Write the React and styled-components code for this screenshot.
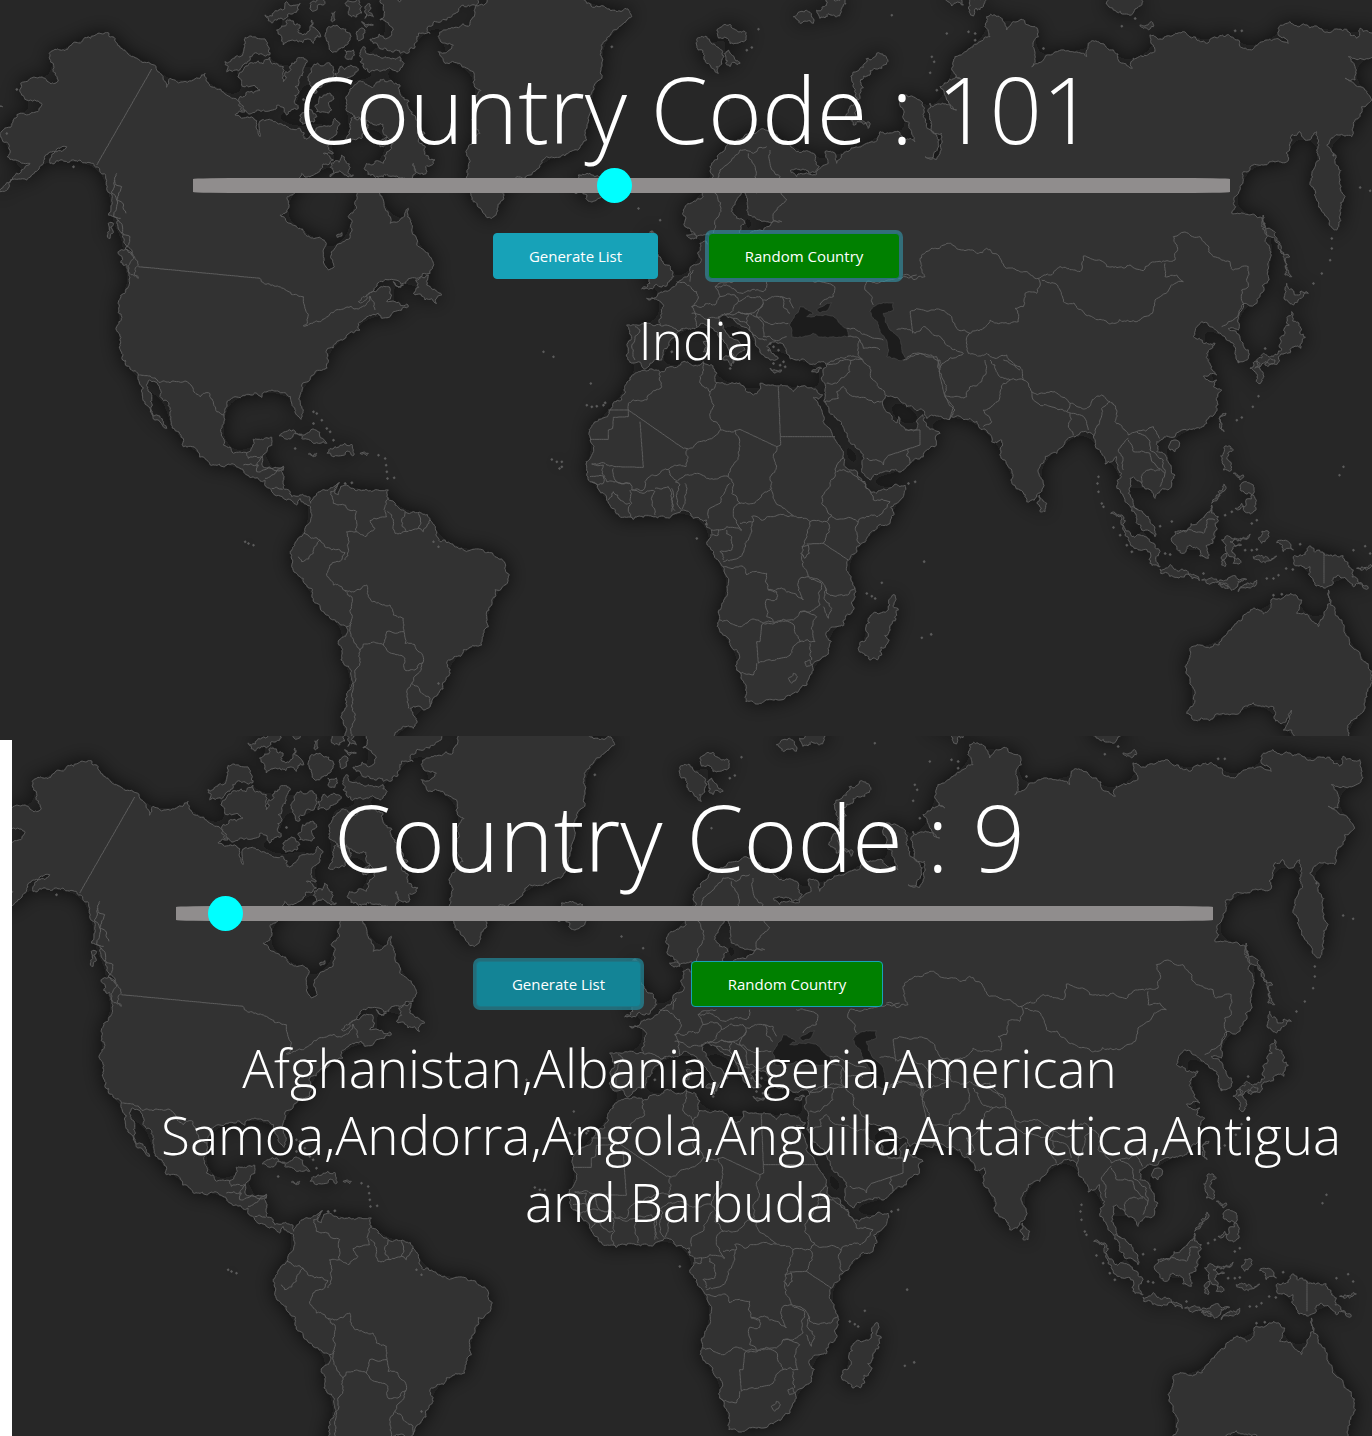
import React, { useId, useState } from "react";
import styled, { createGlobalStyle, css } from "styled-components";

/* ---------- Map data: points are thirds of a map unit, given per tile ---------- */

const TILES = {
  A: [0, 0],
  B: [1260, 0],
  C: [2640, 0],
  D: [300, 1080],
  E: [1680, 1020],
  F: [2760, 1080],
  G: [1800, 570],
  K: [750, 0],
};

const CONTINENTS = [
  [
    "A -20 585 0 570 30 545 60 520 90 490 40 480 22 470 30 450 28 436 8 424 10 390 40 360 70 340 110 335 125 310 80 300 65 285 62 250 100 232 135 235 150 250 175 240 160 215 160 190 148 160 165 148 195 152 250 118 290 103 325 98 345 115 370 150 400 170 440 188 470 210 485 225 500 262 510 235 530 245 580 240 600 235 615 220 625 250 650 268 690 290 730 318 735 335 705 345 725 355 770 362 780 410 785 360 820 365 860 380 900 385 912 415 940 400 960 380 985 378 1005 355 1020 370 1010 400 985 430 1000 460 970 460 1000 480 950 520 930 530 905 520 900 550 862 590 855 640 840 645 870 670 900 685 945 715 975 725 970 770 985 810 1003 800 1008 740 1050 715 1055 670 1045 650 1070 625 1072 580 1080 570 1100 575 1140 570 1150 600 1165 640 1170 670 1195 665 1225 625 1235 690 1250 735 1285 760 1300 790 1290 820 1250 835 1155 838 1110 880 1075 905 1100 885 1140 862 1170 865 1175 885 1160 905 1185 905 1220 912 1225 920 1180 935 1145 955 1135 940 1100 950 1075 970 1080 990 1040 1005 1010 1025 980 1050 985 1080 980 1105",
    "D 680 22 640 45 605 75 600 105 610 150 603 178 590 165 580 140 572 110 555 98 520 92 490 98 485 112 440 103 400 112 380 130 372 165 362 215 370 255 400 280 440 278 460 238 515 232 500 275 485 312 550 318 552 350 550 385 575 410 600 405 630 412 632 430 660 395 690 385 718 368 704 385 704 400 715 404 722 380 745 378 780 390 815 395 865 390 860 410 915 455 965 460 990 480 1010 515 1020 545 1050 550 1085 565 1100 575 1160 578 1215 610 1228 645 1215 675 1175 720 1165 800 1145 855 1110 862 1045 900 1050 940 1015 1000 990 1040 970 1050 930 1045 948 1075 940 1105 885 1118 885 1150 725 1150 730 1080 740 1000 740 800 680 765 650 730 610 655 578 625 578 600 585 550 612 520 632 480 632 440 600 415 590 435 560 420 520 400 495 360 440 345 420 325 400 312 370 320 320 300 250 260 250 235 210 160 180 110 165 65 148 60 155 110 200 205 165 180 150 145 135 125 115 45 75 0",
    "A 375 1085 362 1025 350 980 358 920 385 860 385 800 400 770 380 740 370 700 350 655 325 645 322 560 300 515 280 490 240 480 210 485 150 490 200 440 180 445 130 490 80 540 0 575 -20 592",
  ],
  [
    "B 830 715 795 680 790 630 850 590 880 530 875 490 900 460 960 420 1000 400 1070 405 1110 430 1180 460 1198 500 1170 520 1110 512 1130 530 1190 522 1225 490 1215 455 1245 460 1250 490 1290 450 1340 430 1375 410",
    "C 0 395 60 400 105 425 95 395 68 350 75 285 95 288 118 300 130 350 160 400 178 420 160 472 135 470 170 478 185 430 185 400 160 395 150 360 150 310 160 320 230 330 200 300 180 260 245 240 215 205 225 170 270 145 300 125 330 110 315 80 320 50 345 45 370 65 380 90 395 70 420 60 465 80 475 110 465 160 455 200 490 180 520 160 570 155 620 170 625 130 660 130 700 150 715 180 757 205 760 175 790 170 825 155 810 105 880 105 910 95 980 130 1040 105 1075 120 1090 145 1115 150 1150 125 1200 120 1225 130 1195 85 1270 72 1310 78 1400 88 1430 115 1440 85 1490 95 1490 165 1440 175 1405 170 1425 200 1425 240 1395 235 1440 260 1475 300 1445 320 1420 370 1415 410 1375 405 1340 435 1365 490 1380 540 1395 590 1380 630 1370 690 1340 650 1310 600 1290 550 1300 510 1310 450 1310 395 1285 420 1260 395 1235 405 1230 440 1225 480 1165 490 1090 515 1080 560 1055 640 1090 640 1150 655 1160 700 1172 770 1165 830 1140 890 1130 910 1095 910 1075 950 1075 990 1045 985 1080 1015 1105 1050 1105 1075 1070 1080 1060 1030 1035 1010 1010 992 985 975 965 965 940 1010 970 1030 1005 1030 980 1060 985 1085",
    "F 870 10 890 45 850 48 890 60 880 80 905 90 885 160 860 190 800 210 765 230 740 228 710 245 710 275 740 300 765 345 750 385 705 415 690 390 665 370 640 350 630 355 625 400 645 445 685 470 705 530 665 510 645 460 615 425 605 340 590 290 555 312 545 280 515 220 490 215 455 230 440 240 410 280 360 320 355 400 320 425 300 390 265 320 245 240 215 245 180 205 150 175 85 180 20 175 14 165 8 150",
    "E 1070 212 1040 200 1005 173 978 165 968 183 990 220 1012 248 1016 230 1024 258 1035 268 1070 270 1088 224 1100 260 1140 280 1125 320 1090 350 1050 370 990 395 930 420 918 410 912 355 885 315 850 262 803 198 792 180 795 150 800 80",
    "G 675 518 620 515 590 510 560 490 550 462 530 458 500 470 535 505 510 510 480 480 460 440 430 410 400 385 375 370 355 380 370 410 420 460 435 480 415 490 400 520 395 490 370 450 330 410 310 400 280 415 250 415 215 445 190 480 185 510 150 520 130 535 115 515 85 510 85 480 95 440 80 405 140 400 180 405 190 350 140 325 175 310 210 300 245 270 270 235 300 220 300 160 320 155 335 210 400 215 445 190 450 130 500 110 545 95 480 90 445 75 440 20 430 -5 410 30 395 55 410 85 435 100 420 150 370 200 345 150 325 130 290 140 260 135",
  ],
  [
    "E 245 92 300 98 330 80 430 65 455 75 470 100 465 125 520 130 580 165 600 130 650 138 700 155 770 150 788 165 775 178 760 172 785 210 812 270 832 310 850 345 872 390 905 418 918 445 980 450 1035 435 1030 470 990 550 900 615 865 660 865 700 885 745 880 810 800 875 805 935 765 965 760 990 700 1060 660 1080 590 1092 558 1085 560 1060 530 990 510 900 478 840 500 770 505 730 490 680 440 610 455 575 440 540 400 535 370 510 280 530 220 538 150 495 90 425 80 385 98 340 90 290 150 210 185 180 200 130 240 95",
  ],
  [
    "F 820 1080 800 1060 812 1040 810 960 795 920 810 865 915 828 950 790 1000 745 1030 762 1060 715 1100 705 1145 720 1130 760 1195 800 1212 760 1225 690 1245 745 1265 780 1275 820 1310 870 1345 920 1350 980 1335 1040 1290 1090 1265 1150 1125 1150 1115 1110 1090 1110 1115 1050 1080 1090 1060 1040 1000 1028 910 1060",
  ],
  [
    "B 150 75 70 90 55 110 100 135 55 155 75 190 120 190 160 215 165 330 180 400 140 460 140 530 155 590 190 640 215 655 250 590 290 530 330 525 380 470 450 455 500 420 510 340 520 260 545 200 560 120 580 90 635 50 615 25 560 25 540 20 500 10 460 -20 180 -20 165 40",
  ],
];

const ISLANDS = [
  "K 720 -10 650 20 590 60 540 100 500 110 495 140 470 160 440 150 370 130 360 118 420 110 430 90 390 60 395 -10",
  "K 45 45 110 5 150 10 130 40 80 60 55 62",
  "K 80 90 120 60 150 75 150 100 180 90 185 60 200 90 212 110 190 130 100 135 95 110",
  "K 180 10 210 -5 225 10 200 30 180 25",
  "K 230 90 270 85 300 100 290 135 260 155 235 125",
  "K 285 10 320 -5 335 20 320 50 295 40",
  "K 345 20 360 12 370 50 345 55",
  "K 320 95 345 90 340 115 322 118",
  "K 245 40 255 35 255 60 247 65",
  "K 335 65 370 75 350 82",
  "K 285 150 310 150 305 178 285 172",
  "K 340 140 380 165 450 170 450 210 400 210 330 185 330 160",
  "A 735 113 770 115 805 140 808 165 740 190 715 212 680 215 675 185",
  "A 810 172 850 200 850 245 875 190 920 180 900 230 885 260 885 300 895 325 860 345 790 330 740 335 720 290 760 280 780 270 725 255 730 210 760 190",
  "K 180 220 240 190 250 205 245 240 215 260 195 280 175 235",
  "K 270 200 325 210 290 240 255 245",
  "K 225 285 250 290 245 330 200 335",
  "K 290 300 310 260 340 245 400 238 450 255 455 290 480 330 505 370 510 430 555 480 520 525 490 490 490 545 400 530 345 510 350 490 400 490 420 450 430 430 400 400 390 370 340 350 295 335",
  "K 310 350 355 375 340 400 285 420 300 380",
  "K 240 530 275 465 310 525 280 520",
  "K 385 430 410 410 405 430 390 440",
  "K 150 345 185 330 200 350 175 370 150 360",
  "A 1240 880 1285 825 1290 860 1325 885 1310 910 1275 900",
  "A 1180 845 1210 855 1195 862",
  "A 355 755 410 800 415 835 385 810",
  "A 325 670 340 670 330 715",
  "A 1010 705 1025 698 1025 708 1012 712",
  "A -10 300 8 320 -10 325",
  "B 465 580 475 525 510 520 540 530 545 590 500 592",
  "B 830 120 860 110 890 140 905 150 895 220 865 190 835 150",
  "B 890 90 910 75 975 95 970 125 930 130 905 115",
  "B 925 150 960 190 930 200",
  "B 1120 50 1165 35 1180 70 1140 70",
  "B 1190 30 1220 -5 1280 -5 1250 50 1200 55",
  "B 1370 160 1400 175 1385 205 1350 225 1320 280 1310 330 1350 370 1345 385 1300 375 1285 330 1295 240 1320 205",
  "C 190 -5 250 -5 250 15 215 18",
  "C 265 -5 315 -5 310 20 280 48",
  "C 685 -5 785 -5 770 25 740 42 700 30",
  "C 780 75 815 65 820 80 790 85",
  "G 150 125 165 130 175 200 200 225 218 245 210 270 180 290 125 296 150 280 130 240",
  "E 1005 765 1015 810 990 870 965 945 935 958 910 940 925 880 925 835 960 820 990 795",
  "F 1120 590 1165 562 1210 578 1280 605 1300 630 1345 685 1300 680 1255 645 1240 670 1180 660 1170 620",
  "F 1070 548 1110 550 1120 570 1090 575",
  "F 765 515 800 515 840 480 875 435 895 470 885 490 885 530 865 595 785 580",
  "F 905 540 930 530 990 522 985 535 930 545 965 555 935 570 960 610 940 610 920 580 915 620 905 615",
  "F 572 460 610 470 660 525 720 575 720 620 690 610 640 560 610 500",
  "F 720 628 780 632 835 650 838 662 760 650 722 640",
  "F 845 660 900 660 980 658 900 668",
  "F 955 695 1010 660 960 682",
  "F 895 672 925 685 905 682",
  "F 915 258 940 270 935 330 910 330 905 300",
  "F 975 440 1000 405 1008 450 985 458 965 430 945 445",
  "F 940 340 970 345 960 360",
  "F 965 370 1000 375 995 405 975 400",
  "F 875 430 895 395 912 372 900 400",
  "F 1025 515 1038 512 1035 545 1025 550",
  "F 1000 590 1070 588 1030 595",
  "F 900 170 918 160 912 215 900 205",
  "F 748 255 765 240 778 255 765 275 750 270",
  "F 358 405 380 430 375 455 360 455 353 425",
  "F 1310 625 1360 618 1340 630",
  "D 538 228 580 210 620 220 680 250 640 250 600 222 545 228",
  "D 682 280 705 260 760 270 762 285 715 288",
  "D 625 282 650 280 640 290",
  "D 780 280 805 280 800 287",
  "C 1220 850 1285 880 1260 895 1240 915 1215 900",
  "C 1235 935 1260 980 1262 1045 1215 1060 1150 1090 1125 1105 1150 1060 1205 1050 1215 1000 1228 975",
  "F 990 25 1020 10 1030 40 1022 70",
  "F 1035 10 1065 0 1060 12",
  "C 1150 645 1175 690 1200 730 1230 770 1215 780 1235 830 1215 825 1185 720 1155 670",
  "G 635 545 665 535 650 548",
  "G 368 508 400 505 395 528",
  "G 310 455 322 455 318 485 310 485",
  "G 510 535 545 540 520 545",
];

const INLAND_SEAS = [
  "G 568 405 600 350 640 370 620 380 680 375 740 415 745 440 700 440 640 430 575 440",
  "G 650 360 695 338 682 362 660 370",
  "G 810 365 850 338 880 338 880 362 850 370 870 420 895 440 920 510 860 500 862 460 840 420",
];

const BORDERS = [
  "A 350 520 345 550 365 560 350 600 378 640",
  "A 345 540 335 580 350 620 340 650 362 655",
  "A 355 660 365 700 390 710 375 745 400 765",
  "A 780 835 850 865 910 890 922 970 910 978 965 962 1030 927 1075 927 1110 888 1125 930",
  "D 150 48 210 68 262 65 300 110 325 98 350 155 372 165",
  "D 440 278 445 295 470 290 485 290 470 320",
  "D 430 315 475 315 470 335 552 325",
  "D 495 355 515 345 552 330",
  "D 515 385 530 382 548 388",
  "D 718 368 692 395 700 430 770 455 768 515 740 515 745 540 735 600",
  "D 612 520 660 540 640 580 605 605 595 590",
  "D 660 540 695 570 735 578 725 600 690 615 682 650 700 675 725 680 735 692",
  "D 768 515 795 530 825 505 810 482 860 470 855 440 865 415",
  "D 862 455 880 480 885 520 920 515 905 480 915 455",
  "D 920 515 955 505 955 460",
  "D 955 505 970 515 990 480",
  "D 735 692 770 690 800 675 805 710 870 735 880 765 910 775 912 815 860 815 850 855 790 852 780 870 750 790 755 710 735 692",
  "D 850 855 915 895 915 930 945 930 970 905 965 880 945 855 915 850 912 815",
  "D 970 905 935 970 925 1045",
  "D 935 970 990 1015 990 1040",
  "D 780 870 765 940 755 1000 765 1080 765 1150",
  "D 740 800 755 790",
  "E 298 98 305 140 260 180 205 190 205 210",
  "E 370 325 400 322 482 270 455 240 450 155 420 110 430 68",
  "E 450 155 470 130",
  "E 165 380 135 370 95 372",
  "E 382 325 378 380 325 388 300 400 255 425 250 450 215 450 210 430 165 420 160 385",
  "E 325 388 330 405 350 425 375 405 440 415 505 410 520 375 538 310 525 272 482 270",
  "E 650 320 650 378 630 410 635 445 600 475 540 490 515 460 520 430 505 410",
  "E 510 430 480 490 445 510 445 535",
  "E 540 490 520 515 530 550 545 570",
  "E 540 550 580 545 575 530 640 530 700 528 640 475 630 445",
  "E 455 570 545 572",
  "E 455 585 475 585 475 570",
  "E 500 570 500 582 515 590 515 630 480 635 490 660",
  "E 580 545 565 600 540 650 490 665",
  "E 490 680 550 680 560 705 620 700 625 750 700 760 730 780 715 740 720 715 745 710 725 640 735 600 750 545 700 528",
  "E 625 750 650 755 650 778 620 778 620 830 640 845",
  "E 480 840 600 845 660 842 700 840 720 815 780 795 775 760 785 730 745 710",
  "E 850 350 830 375 825 400 800 450 785 490 815 525 800 545 750 545",
  "E 830 395 870 395 915 425 915 440 940 480 990 485 950 530 895 545 815 530",
  "E 895 545 890 600 900 612",
  "E 800 545 808 575 790 610",
  "E 885 745 800 760 795 740 745 710",
  "E 795 740 795 780 815 805 805 835 790 800",
  "E 665 842 720 905 765 905 770 830 740 815 720 815",
  "E 605 855 665 845",
  "E 595 970 660 955 720 905",
  "E 530 990 580 1005 590 970",
  "E 750 910 755 960",
  "E 735 965 750 960 755 975 740 980 735 965",
  "E 685 1015 700 1000 712 1010 695 1030 685 1015",
  "E 722 640 735 655 748 640 745 615 725 620",
  "E 95 372 130 375 140 425 210 430",
  "E 90 410 130 408 130 430 95 425",
  "E 210 450 215 490 205 510 220 538",
  "E 210 490 180 480 160 455 145 480",
  "E 215 450 285 455 285 525",
  "E 285 445 325 440 335 515",
  "E 335 445 345 512",
  "E 345 425 360 435 362 508",
  "E 375 430 365 508",
  "E 795 185 835 175 830 155 850 140 925 180 965 185",
  "E 800 130 830 130 870 95 875 60",
  "E 905 55 930 80 940 120 975 165",
  "E 905 55 880 60 800 72",
  "E 920 355 970 375 990 345",
  "E 1045 325 1050 370",
  "E 1030 60 1080 40 1130 50 1145 110 1155 165 1185 210 1165 240",
  "F 75 110 140 110 150 80 185 65 200 20 195 0",
  "F 190 200 215 185 190 150 225 130 250 70 270 60 235 45 225 15 210 0",
  "F 270 60 310 60 335 95 340 120 440 155 450 130 500 145 545 105 570 125 545 145 540 180 520 230",
  "F 335 95 370 100 450 130",
  "F 440 155 460 160 500 185 505 210",
  "F 450 160 460 225",
  "F 310 60 300 20 250 0",
  "F 570 125 590 150 585 185 625 225 650 215 700 200 720 235",
  "F 625 235 595 270 610 330",
  "F 650 215 690 245 690 270 730 300 735 340 720 380",
  "F 625 240 640 275 690 280 715 325 735 340",
  "F 665 370 670 340 720 330",
  "F 770 520 850 520 860 480 885 480",
  "F 635 440 655 450",
  "C 70 825 135 830 120 775 215 732 250 750 290 760 320 745 380 805 435 815 475 835 470 880 435 880 430 920 405 925 415 965 330 960 270 1000 235 990 215 950 130 930 90 935",
  "C 475 835 540 800 600 815 610 768 655 780 680 800 750 795 790 812 830 785 885 780 880 710 920 698 960 710 1000 770 1050 785 1060 810 1105 800 1105 860 1085 870 1090 910 1025 980",
  "C 485 840 540 870 550 905 605 930 630 948 750 965 820 930 825 900 910 845 890 825 855 830 855 790",
  "C 50 990 105 1000 130 980 190 1020 250 1060 180 1100",
  "C 270 1000 265 1060 320 1060 345 1075 380 1065 420 1110",
  "C 80 1075 120 1060 180 1080 180 1110",
  "G 105 410 120 420 105 510",
  "G 180 405 215 410 250 420",
  "G 230 275 290 305 290 335 275 350 285 385 290 410",
  "G 280 240 270 275",
  "G 275 350 330 340 345 345 360 320 345 290 400 275",
  "G 345 290 380 285 430 310 490 305 500 275",
  "G 360 320 405 315 415 335 370 375 275 370",
  "G 415 335 480 320 490 340 450 370 415 365",
  "G 490 340 470 380 505 400 565 400",
  "G 490 330 545 320 570 370",
  "G 540 320 570 325 580 355",
  "G 375 375 450 370 440 400 400 385",
  "G 450 370 490 410 490 440 560 440",
  "G 440 400 470 440 500 450",
  "G 640 275 705 295 700 320 660 345",
  "G 740 415 800 435 850 450",
  "G 745 440 780 450 790 475 840 480",
  "G 780 450 785 510 680 520",
  "G 950 255 910 260 870 270 800 275 795 300 820 345",
  "B 880 700 885 580 900 510 935 480 960 450 1000 460 1040 440",
  "B 985 460 1005 530 1010 580",
  "B 1050 450 1050 490 1080 530 1100 600 1060 660",
];

const STRAIGHT_BORDERS = [
  "A 455 207 290 495",
  "A 415 800 780 835",
  "D 118 45 150 48",
  "E 205 210 145 210",
  "E 205 210 205 230 160 232 158 265 145 270 145 298 90 298",
  "E 205 210 370 325",
  "E 240 245 250 382 165 380",
  "E 525 272 540 268 650 320",
  "E 655 140 662 315 650 320",
  "E 662 290 825 290",
  "E 740 612 790 610 865 660",
  "E 605 855 600 905 590 905 595 970",
  "E 990 345 1080 315 1080 270 1035 270",
  "F 1212 578 1212 670",
  "F 55 0 60 50 75 110 100 140 88 180",
  "C 90 935 98 1000",
];

const ISLETS = [
  "A 50 268 220 500 20 400 910 298",
  "B 655 625 720 660 370 1055 400 1070 575 140 1015 87 980 150 995 142 1415 45 925 300 695 695",
  "C 35 45 200 100 265 95 285 100 285 120 155 170 162 185 150 218 725 78 765 55 490 145 1065 92 1085 92 170 270 1360 465 1355 715 1355 745 1350 780 1325 820 1300 850 1440 562 1470 572 1155 1045",
  "D 435 545 445 550 460 555 640 155 650 160 665 180 680 205 690 215 700 240 640 190 585 265 835 285 855 295 858 315 860 335 862 355 882 353 735 370 755 368 1355 298 1370 305 1378 325 1015 970 1000 545 1015 560",
  "E 92 130 80 195 95 200 110 198 130 195 135 188 5 365 5 380 438 552 410 595 1092 665 965 728 920 760 935 768 945 775 1085 893 1113 882 1045 430 1065 425 510 85",
  "F 535 350 532 370 535 395 545 430 550 440 720 498 755 484 735 580 750 583 600 525 620 555 635 575 580 502 915 465 935 455 1010 480 995 490 975 570 995 570 1010 568 1040 655 1075 645 1060 655 1118 628 1098 625 1140 552 1300 570 1335 558 1350 580 1270 320 1258 345 1015 108 998 140 950 180 965 172 955 5 12 604 5 833 33 823 1060 705 1085 702 850 640",
  "G 505 480 520 470 535 480 510 460 520 520 540 525 550 515 555 530 215 485 115 55 180 90",
];

const noise = (x, y) => {
  const v = Math.sin(x * 12.9898 + y * 78.233) * 43758.5453;
  return (v - Math.floor(v)) * 2 - 1;
};

const readPoints = (spec) => {
  const [tile, ...numbers] = spec.split(" ");
  const [ox, oy] = TILES[tile];
  const points = [];
  for (let i = 0; i < numbers.length; i += 2) {
    points.push([Number(numbers[i]) + ox, Number(numbers[i + 1]) + oy]);
  }
  return points;
};

const roughen = (a, b, amount, out) => {
  const dx = b[0] - a[0];
  const dy = b[1] - a[1];
  if (Math.hypot(dx, dy) < 7) {
    out.push(b);
    return;
  }
  const shift = noise(a[0] + b[0], a[1] + b[1]) * amount;
  const mid = [(a[0] + b[0]) / 2 - dy * shift, (a[1] + b[1]) / 2 + dx * shift];
  roughen(a, mid, amount, out);
  roughen(mid, b, amount, out);
};

const toPath = (points, amount, closed) => {
  const source = closed ? [...points, points[0]] : points;
  const out = [source[0]];
  for (let i = 1; i < source.length; i += 1) roughen(source[i - 1], source[i], amount, out);
  return `M${out.map(([x, y]) => `${x.toFixed(0)} ${y.toFixed(0)}`).join("L")}${closed ? "Z" : ""}`;
};

const LAND_PATH = [
  ...CONTINENTS.map((parts) => toPath(parts.flatMap(readPoints), 0.23, true)),
  ...ISLANDS.map((spec) => toPath(readPoints(spec), 0.32, true)),
].join("");
const SEA_PATH = INLAND_SEAS.map((spec) => toPath(readPoints(spec), 0.14, true)).join("");
const BORDER_PATH = [
  ...BORDERS.map((spec) => toPath(readPoints(spec), 0.18, false)),
  ...STRAIGHT_BORDERS.map((spec) => toPath(readPoints(spec), 0, false)),
].join("");
const ISLET_PATH = ISLETS.flatMap(readPoints)
  .map(([x, y]) => `M${x - 4} ${y}l5 -4l4 5l-5 4z`)
  .join("");

/* ---------- Styles ---------- */

const GlobalStyle = createGlobalStyle`
  *, *::before, *::after { box-sizing: border-box; }
  body {
    margin: 0;
    background: #fff;
    color: #fff;
    font-family: "Open Sans", "Noto Sans", sans-serif;
  }
`;

const Page = styled.main`
  display: grid;
  grid-template-columns: minmax(0, 1fr);
  grid-template-rows: 740fr 696fr;
  min-height: 100vh;
  overflow: hidden;
`;

const Panel = styled.section`
  position: relative;
  overflow: hidden;
  background: #272727;
  padding: 51px 157px 24px 178px;

  ${({ $inset }) =>
    $inset &&
    css`
      margin: -4px 0 0 12px;
      padding: 43px 174px 24px 149px;
    `}
`;

const Backdrop = styled.svg`
  position: absolute;
  inset: 0;
  width: 100%;
  height: 100%;
`;

const Content = styled.div`
  position: relative;
  display: flex;
  flex-direction: column;
  align-items: stretch;
  text-align: center;
`;

const Title = styled.h1`
  margin: 0;
  font-size: 92px;
  font-weight: 300;
  line-height: 115px;
  white-space: nowrap;
`;

const Slider = styled.input`
  appearance: none;
  width: 100%;
  height: 15px;
  margin: 12px 0 0 15px;
  border-radius: 60px / 1px;
  background: #908d8d;
  outline: none;

  &::-webkit-slider-thumb {
    appearance: none;
    width: 35px;
    height: 35px;
    border-radius: 50%;
    background: #00ffff;
    cursor: pointer;
  }

  &::-moz-range-thumb {
    width: 35px;
    height: 35px;
    border: 0;
    border-radius: 50%;
    background: #00ffff;
    cursor: pointer;
  }
`;

const Actions = styled.div`
  display: flex;
  justify-content: center;
  gap: 50px;
  margin-top: 40px;
`;

const Button = styled.button`
  min-width: ${({ $random }) => ($random ? "192px" : "165px")};
  height: 46px;
  padding: 0 24px;
  border: 1px solid #17a2b8;
  border-radius: 4px;
  background: ${({ $random }) => ($random ? "#008000" : "#17a2b8")};
  color: #fff;
  font: 400 15px/24px "Open Sans", "Noto Sans", sans-serif;
  white-space: nowrap;
  cursor: pointer;
  outline: none;

  ${({ $active, $random }) =>
    $active &&
    css`
      border-color: ${$random ? "#2b6f7c" : "#1e7685"};
      background: ${$random ? "#008000" : "#138496"};
      box-shadow: 0 0 0 3px ${$random ? "rgba(52, 150, 170, 0.6)" : "rgba(34, 140, 158, 0.7)"};
    `}
`;

const Result = styled.p`
  margin: 27px 0 0;
  font-size: 53px;
  font-weight: 300;
  line-height: 67px;
`;

/* ---------- Components ---------- */

function WorldMap({ viewBox }) {
  const shade = useId();
  return (
    <Backdrop viewBox={viewBox} preserveAspectRatio="xMinYMin slice" aria-hidden="true">
      <defs>
        <filter id={shade} x="-5%" y="-5%" width="110%" height="110%">
          <feDropShadow dx="0" dy="0" stdDeviation="10" floodColor="#0e0e0e" floodOpacity="0.7" />
        </filter>
      </defs>
      <g filter={`url(#${shade})`}>
        <g transform="scale(0.33333)" strokeLinejoin="round">
          <path d={LAND_PATH} fill="#313131" stroke="#5a5a5a" strokeWidth="3" />
          <path d={ISLET_PATH} fill="#5c5c5c" />
        </g>
      </g>
      <g transform="scale(0.33333)" strokeLinejoin="round">
        <path d={SEA_PATH} fill="#1c1c1c" stroke="#484848" strokeWidth="2" />
        <path d={BORDER_PATH} fill="none" stroke="#5e5e5e" strokeWidth="3" />
      </g>
    </Backdrop>
  );
}

function CountryPanel({ inset, viewBox, initialCode, initialResult, initialActive }) {
  const id = useId();
  const [code, setCode] = useState(initialCode);
  const [active, setActive] = useState(initialActive);

  return (
    <Panel $inset={inset}>
      <WorldMap viewBox={viewBox} />
      <Content>
        <Title>
          <label htmlFor={id}>Country Code : {code}</label>
        </Title>
        <Slider
          id={id}
          type="range"
          min="1"
          max="249"
          value={code}
          onChange={(event) => setCode(event.target.value)}
        />
        <Actions>
          <Button type="button" $active={active === "list"} onClick={() => setActive("list")}>
            Generate List
          </Button>
          <Button
            type="button"
            $random
            $active={active === "random"}
            onClick={() => setActive("random")}
          >
            Random Country
          </Button>
        </Actions>
        <Result>{initialResult}</Result>
      </Content>
    </Panel>
  );
}

export default function App() {
  return (
    <>
      <GlobalStyle />
      <Page>
        <CountryPanel
          viewBox="0 0 1372 740"
          initialCode={101}
          initialResult="India"
          initialActive="random"
        />
        <CountryPanel
          inset
          viewBox="29 8 1360 700"
          initialCode={9}
          initialResult="Afghanistan,Albania,Algeria,American Samoa,Andorra,Angola,Anguilla,Antarctica,Antigua and Barbuda"
          initialActive="list"
        />
      </Page>
    </>
  );
}
